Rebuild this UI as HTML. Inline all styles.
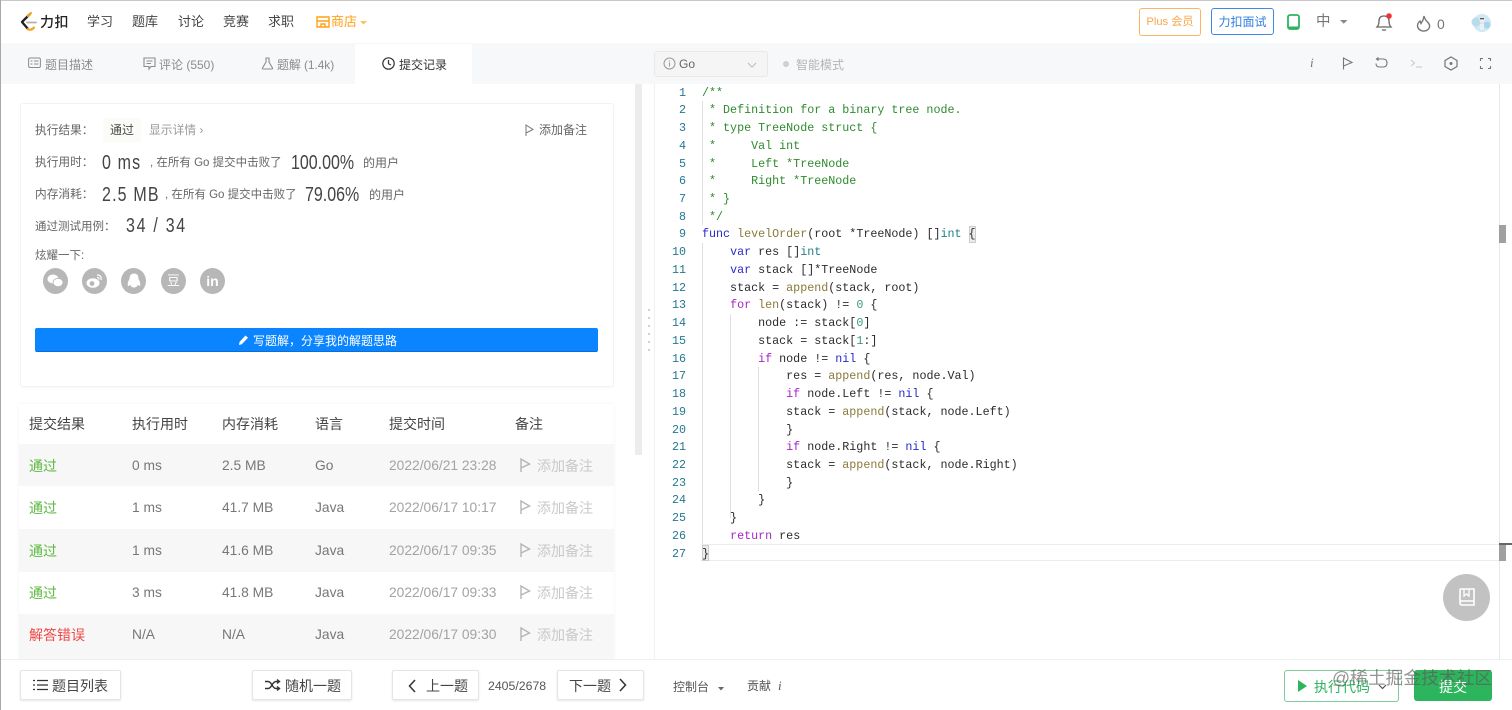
<!DOCTYPE html>
<html lang="zh">
<head>
<meta charset="utf-8">
<title>力扣</title>
<style>
html,body{margin:0;padding:0;background:#fff;}
body{width:1512px;height:710px;overflow:hidden;position:relative;font-family:"Liberation Sans","Noto Sans CJK SC",sans-serif;font-size:12px;color:#5f5f5f;}
.a{position:absolute;white-space:nowrap;}
.t{position:absolute;white-space:nowrap;line-height:20px;height:20px;}
svg{position:absolute;overflow:visible;}
.nav{font-size:13px;color:#444;top:12px;}
.tab{font-size:12px;color:#8c8c8c;top:54px;}
.lbl{font-size:11.7px;color:#666;}
.big{font-size:20.5px;color:#444;transform-origin:0 50%;transform:scaleX(.78);}
.soc{position:absolute;top:268px;width:25px;height:26px;border-radius:50%;background:#b7b7b7;color:#fff;text-align:center;line-height:26px;font-weight:bold;font-size:13px;}
.row{position:absolute;left:19px;width:595px;}
.th{font-size:14px;color:#444;top:414px;}
.c{font-size:13.8px;color:#777;}
.tm{color:#a3a3a3;}
.nt{color:#c9c9c9;font-size:14px;left:537px;}
.g{color:#5cb83f;font-size:14px;left:29px;}
.r{color:#ef4743;font-size:14px;left:29px;}
.btn{position:absolute;top:670px;height:30px;background:#fff;border:1px solid #e5e5e5;border-radius:2px;box-shadow:0 1px 2px rgba(0,0,0,.1);box-sizing:border-box;}
.bt{font-size:14px;color:#444;top:676px;}
#code{position:absolute;left:702px;top:84.6px;font-family:"Liberation Mono",monospace;font-size:11.7px;line-height:17.73px;color:#2b2b2b;white-space:pre;}
#nums{position:absolute;left:656px;width:30px;top:84.6px;text-align:right;font-family:"Liberation Mono",monospace;font-size:11.7px;line-height:17.73px;color:#237893;white-space:pre;}
.cm{color:#2e8b2e;}.kw{color:#2a2acb;}.kp{color:#a626c4;}.fn{color:#8a7a3a;}.ty{color:#23808a;}.nu{color:#3a9a7a;}
.ig{position:absolute;width:1px;background:#e0e0e0;}
</style>
</head>
<body>
<!-- page edges -->
<div class="a" style="left:0;top:0;width:1512px;height:1px;background:#c8c8c8"></div>
<div class="a" style="left:0;top:0;width:1px;height:710px;background:#a8a8a8"></div>

<!-- top nav -->
<svg style="left:19px;top:12px" width="18" height="20" viewBox="0 0 18 20"><path d="M11 2 L3 10 L9 17" fill="none" stroke="#222" stroke-width="2.3" stroke-linecap="round" stroke-linejoin="round"/><path d="M8 10.5H17" stroke="#b3b3b3" stroke-width="1.8" stroke-linecap="round"/><path d="M9 17 Q12 19 15 15.5" fill="none" stroke="#f5a623" stroke-width="2.2" stroke-linecap="round"/><path d="M9 4 L12 1" stroke="#f5a623" stroke-width="2.2" stroke-linecap="round"/></svg>
<div class="t" style="left:40px;top:12px;font-size:14px;font-weight:500;color:#222;letter-spacing:.5px">力扣</div>
<div class="t nav" style="left:87px">学习</div>
<div class="t nav" style="left:132px">题库</div>
<div class="t nav" style="left:178px">讨论</div>
<div class="t nav" style="left:223px">竞赛</div>
<div class="t nav" style="left:268px">求职</div>
<svg style="left:316px;top:16px" width="14" height="12" viewBox="0 0 14 12"><path d="M1 1H13V11H1ZM1 5H13M5 11V8H9V11" fill="none" stroke="#ffa116" stroke-width="1.4"/></svg>
<div class="t nav" style="left:331px;color:#ffa116">商店</div>
<svg style="left:360px;top:21px" width="8" height="5"><path d="M0 0H7L3.500 3.500Z" fill="#ffa116" opacity=".7"/></svg>

<div class="a" style="left:1139px;top:8px;width:62px;height:28px;box-sizing:border-box;border:1px solid #f9b662;border-radius:3px;text-align:center;line-height:27px;font-size:11.2px;color:#f9a64a">Plus 会员</div>
<div class="a" style="left:1211px;top:8px;width:63px;height:27px;box-sizing:border-box;border:1px solid #3d8ae6;border-radius:3px;text-align:center;line-height:26px;font-size:12px;color:#2f80e0">力扣面试</div>
<svg style="left:1287px;top:14px" width="13" height="16" viewBox="0 0 13 16"><rect x="1" y="1" width="11" height="14" rx="2" fill="none" stroke="#2db55d" stroke-width="1.800"/><path d="M1 13.500H12" stroke="#2db55d" stroke-width="2"/></svg>
<div class="t" style="left:1316px;top:12px;font-size:14.500px;color:#777">中</div>
<svg style="left:1340px;top:20px" width="9" height="5"><path d="M0 0H7.500L3.750 3.800Z" fill="#888"/></svg>
<svg style="left:1375px;top:13px" width="18" height="19" viewBox="0 0 18 19"><path d="M2 14 Q4 12 4 8 Q4 3 9 3 Q14 3 14 8 Q14 12 16 14 Z M7 16.500 Q9 18 11 16.500" fill="none" stroke="#666" stroke-width="1.300"/><circle cx="14" cy="3" r="2.800" fill="#ee3333"/></svg>
<svg style="left:1416px;top:15px" width="16" height="17" viewBox="0 0 16 17"><path d="M8 1 Q9 5 12 7.500 Q15 11 12.500 14 Q10 16.500 6.500 16 Q2 15 1.500 11 Q1.500 8 4 6 L5 8.500 Q7.500 5 8 1Z" fill="none" stroke="#777" stroke-width="1.400"/></svg>
<div class="t" style="left:1437px;top:14px;font-size:14px;color:#777">0</div>
<svg style="left:1470px;top:13px" width="22" height="20" viewBox="0 0 22 20"><circle cx="12" cy="10" r="9" fill="#cfe9f5"/><circle cx="6" cy="9" r="4.500" fill="#b9dcea"/><circle cx="17" cy="12" r="3.500" fill="#a9d6ea"/><circle cx="12" cy="7" r="2.600" fill="#f4ece6"/><path d="M10 11H14V17H10Z" fill="#e8f1f5"/><path d="M10 5H14V6.300H10Z" fill="#555"/></svg>

<!-- tab bar -->
<div class="a" style="left:1px;top:43px;width:1511px;height:41px;background:#f7f8f9"></div>
<div class="a" style="left:355px;top:44px;width:117px;height:41px;background:#fff"></div>
<svg style="left:28px;top:57px" width="13" height="12" viewBox="0 0 13 12"><rect x=".6" y="1" width="11.800" height="9.500" rx="1.500" fill="none" stroke="#8c8c8c"/><path d="M2.500 4H4.500M6 4H10.500M2.500 7H4.500M6 7H10.500" stroke="#8c8c8c"/></svg>
<div class="t tab" style="left:45px;top:55px">题目描述</div>
<svg style="left:143px;top:57px" width="13" height="13" viewBox="0 0 13 13"><path d="M1 1H12V9.500H8L6 12V9.500H1Z" fill="none" stroke="#8c8c8c" stroke-width="1.100"/><path d="M3.500 4H9.500M3.500 6.500H8" stroke="#8c8c8c"/></svg>
<div class="t tab" style="left:159px;top:55px">评论 (550)</div>
<svg style="left:261px;top:57px" width="13" height="13" viewBox="0 0 13 13"><path d="M4.500 1H8.500M5 1V5L1.500 11Q1 12 2.500 12H10.500Q12 12 11.500 11L8 5V1" fill="none" stroke="#8c8c8c" stroke-width="1.100"/></svg>
<div class="t tab" style="left:277px;top:55px;letter-spacing:-.1px">题解 (1.4k)</div>
<svg style="left:382px;top:57px" width="13" height="13" viewBox="0 0 13 13"><circle cx="6.500" cy="6.500" r="5.700" fill="none" stroke="#333" stroke-width="1.200"/><path d="M6.500 3V6.800L9 8" fill="none" stroke="#333" stroke-width="1.200"/></svg>
<div class="t tab" style="left:399px;top:55px;color:#333">提交记录</div>

<div class="a" style="left:654px;top:51px;width:114px;height:26px;box-sizing:border-box;background:#f5f5f5;border:1px solid #e8e8e8;border-radius:3px"></div>
<svg style="left:663px;top:57px" width="13" height="13" viewBox="0 0 13 13"><circle cx="6.500" cy="6.500" r="5.500" fill="none" stroke="#999"/><path d="M6.500 5.500V9.500M6.500 3.500V4.500" stroke="#999"/></svg>
<div class="t" style="left:679px;top:54px;font-size:12px;color:#666">Go</div>
<svg style="left:747px;top:62px" width="10" height="6"><path d="M1 1L5 5L9 1" fill="none" stroke="#bbb"/></svg>
<div class="a" style="left:783px;top:61px;width:6px;height:6px;border-radius:50%;background:#cfcfcf"></div>
<div class="t" style="left:796px;top:55px;font-size:12px;color:#b5b5b5">智能模式</div>

<div class="t" style="left:1310px;top:53px;font-size:13px;font-style:italic;font-family:'Liberation Serif',serif;color:#777">i</div>
<svg style="left:1342px;top:57px" width="11" height="13" viewBox="0 0 11 13"><path d="M1.500 12.500V1L10 5.500L1.500 9" fill="none" stroke="#777" stroke-width="1.100"/></svg>
<svg style="left:1375px;top:57px" width="13" height="12" viewBox="0 0 13 12"><path d="M2 2H8.500Q12 2.500 12 6Q12 10 8 10H4.500Q1 10 1 6.500M3.500 .5L1.500 2L3.500 3.500" fill="none" stroke="#777" stroke-width="1.100"/></svg>
<svg style="left:1410px;top:58px" width="13" height="12" viewBox="0 0 13 12"><path d="M1 2L4.500 5L1 8M6 9H12" fill="none" stroke="#c8c8c8" stroke-width="1"/></svg>
<svg style="left:1444px;top:56px" width="14" height="15" viewBox="0 0 14 15"><path d="M7 1L13 4.500V10.500L7 14L1 10.500V4.500Z" fill="none" stroke="#777" stroke-width="1.200"/><circle cx="7" cy="7.500" r="1.500" fill="#777"/></svg>
<svg style="left:1480px;top:58px" width="11" height="11" viewBox="0 0 11 11"><path d="M.5 3V.5H3M8 .5H10.500V3M10.500 8V10.500H8M3 10.500H.5V8" fill="none" stroke="#777" stroke-width="1.100"/></svg>

<!-- result card -->
<div class="a" style="left:20px;top:103px;width:594px;height:284px;box-sizing:border-box;background:#fff;border:1px solid #f3f3f3;border-radius:3px;box-shadow:0 1px 2px rgba(0,0,0,.03)"></div>
<div class="t lbl" style="left:35px;top:121px">执行结果：</div>
<div class="a" style="left:103px;top:118px;width:38px;height:24px;background:#fbfcf8;border-radius:3px"></div>
<div class="t" style="left:110px;top:120px;font-size:12px;color:#4a4a4a">通过</div>
<div class="t" style="left:149px;top:120px;font-size:11.8px;color:#9a9a9a">显示详情 ›</div>
<svg style="left:525px;top:124px" width="9" height="13" viewBox="0 0 9 13"><path d="M1 12V1L8 5.500L1 9" fill="none" stroke="#777" stroke-width="1"/></svg>
<div class="t" style="left:539px;top:120px;font-size:12px;color:#666">添加备注</div>

<div class="t lbl" style="left:35px;top:153px">执行用时：</div>
<div class="t big" style="left:102px;top:153px;letter-spacing:1.500px">0 ms</div>
<div class="t lbl" style="left:150px;top:153px;font-size:11.500px">, 在所有 Go 提交中击败了</div>
<div class="t big" style="left:291px;top:153px">100.00%</div>
<div class="t lbl" style="left:363px;top:153px;font-size:12px">的用户</div>

<div class="t lbl" style="left:35px;top:185px">内存消耗：</div>
<div class="t big" style="left:102px;top:185px;letter-spacing:1.500px">2.5 MB</div>
<div class="t lbl" style="left:165px;top:185px;font-size:11.5px">, 在所有 Go 提交中击败了</div>
<div class="t big" style="left:305px;top:185px">79.06%</div>
<div class="t lbl" style="left:369px;top:185px;font-size:12px">的用户</div>

<div class="t lbl" style="left:35px;top:217px;font-size:11.5px">通过测试用例：</div>
<div class="t big" style="left:126px;top:216px;letter-spacing:2.200px">34 / 34</div>

<div class="t lbl" style="left:35px;top:246px;font-size:11.5px">炫耀一下:</div>
<div class="soc" style="left:43px"></div>
<svg style="left:47px;top:274px" width="17" height="14" viewBox="0 0 17 14"><ellipse cx="6" cy="5" rx="5.500" ry="4.500" fill="#fff"/><ellipse cx="11" cy="8.500" rx="5" ry="4.200" fill="#fff" stroke="#b7b7b7" stroke-width=".8"/></svg>
<div class="soc" style="left:82px"></div>
<svg style="left:85px;top:273px" width="19" height="16" viewBox="0 0 19 16"><ellipse cx="8" cy="10" rx="6.500" ry="4.800" fill="#fff"/><circle cx="7" cy="10.500" r="2.400" fill="#b7b7b7"/><path d="M12 2Q17 2 16 7M12 4.500Q14.500 4.500 14 6.500" fill="none" stroke="#fff" stroke-width="1.200"/></svg>
<div class="soc" style="left:121px"></div>
<svg style="left:127px;top:273px" width="14" height="16" viewBox="0 0 14 16"><path d="M7 .5Q11.500 .5 11.500 6Q14 10 13 13Q11.500 12.500 10.500 12Q10 14.500 7 14.500Q4 14.500 3.500 12Q2.500 12.500 1 13Q0 10 2.500 6Q2.500 .5 7 .5Z" fill="#fff"/></svg>
<div class="soc" style="left:161px;font-size:13px;font-weight:normal">豆</div>
<div class="soc" style="left:200px;font-size:14px;font-family:'Liberation Sans',sans-serif">in</div>

<div class="a" style="left:35px;top:328px;width:563px;height:24px;background:#0a84ff;border-radius:2px;border-bottom:1px solid #0a6fd4;box-sizing:border-box"></div>
<svg style="left:238px;top:334px" width="11" height="12" viewBox="0 0 11 12"><path d="M1 11L1.500 8L7.500 1.500L10 3.800L3.800 10.300Z" fill="#fff"/></svg>
<div class="t" style="left:253px;top:331px;font-size:12px;color:#fff">写题解，分享我的解题思路</div>

<!-- table -->
<div class="a" style="left:19px;top:404px;width:595px;height:255px;background:#fff;box-shadow:0 0 3px rgba(0,0,0,.06)"></div>
<div class="row" style="top:444px;height:42px;background:#f7f7f7"></div>
<div class="row" style="top:529px;height:43px;background:#f7f7f7"></div>
<div class="row" style="top:614px;height:45px;background:#f7f7f7"></div>
<div class="t th" style="left:29px">提交结果</div>
<div class="t th" style="left:132px">执行用时</div>
<div class="t th" style="left:222px">内存消耗</div>
<div class="t th" style="left:315px">语言</div>
<div class="t th" style="left:389px">提交时间</div>
<div class="t th" style="left:515px">备注</div>

<div class="t g" style="top:456px">通过</div><div class="t c" style="left:132px;top:456px">0 ms</div><div class="t c" style="left:222px;top:456px">2.5 MB</div><div class="t c" style="left:315px;top:456px">Go</div><div class="t c tm" style="left:389px;top:456px">2022/06/21 23:28</div><div class="t nt" style="top:456px">添加备注</div>
<div class="t g" style="top:498px">通过</div><div class="t c" style="left:132px;top:498px">1 ms</div><div class="t c" style="left:222px;top:498px">41.7 MB</div><div class="t c" style="left:315px;top:498px">Java</div><div class="t c tm" style="left:389px;top:498px">2022/06/17 10:17</div><div class="t nt" style="top:498px">添加备注</div>
<div class="t g" style="top:541px">通过</div><div class="t c" style="left:132px;top:541px">1 ms</div><div class="t c" style="left:222px;top:541px">41.6 MB</div><div class="t c" style="left:315px;top:541px">Java</div><div class="t c tm" style="left:389px;top:541px">2022/06/17 09:35</div><div class="t nt" style="top:541px">添加备注</div>
<div class="t g" style="top:583px">通过</div><div class="t c" style="left:132px;top:583px">3 ms</div><div class="t c" style="left:222px;top:583px">41.8 MB</div><div class="t c" style="left:315px;top:583px">Java</div><div class="t c tm" style="left:389px;top:583px">2022/06/17 09:33</div><div class="t nt" style="top:583px">添加备注</div>
<div class="t r" style="top:625px">解答错误</div><div class="t c" style="left:132px;top:625px">N/A</div><div class="t c" style="left:222px;top:625px">N/A</div><div class="t c" style="left:315px;top:625px">Java</div><div class="t c tm" style="left:389px;top:625px">2022/06/17 09:30</div><div class="t nt" style="top:625px">添加备注</div>

<svg style="left:520px;top:458px" width="11" height="15" viewBox="0 0 11 15"><path d="M1 14V1L9.500 6L1 10" fill="none" stroke="#b5b5b5" stroke-width="1.400"/></svg>
<svg style="left:520px;top:500px" width="11" height="15" viewBox="0 0 11 15"><path d="M1 14V1L9.500 6L1 10" fill="none" stroke="#b5b5b5" stroke-width="1.400"/></svg>
<svg style="left:520px;top:543px" width="11" height="15" viewBox="0 0 11 15"><path d="M1 14V1L9.500 6L1 10" fill="none" stroke="#b5b5b5" stroke-width="1.400"/></svg>
<svg style="left:520px;top:585px" width="11" height="15" viewBox="0 0 11 15"><path d="M1 14V1L9.500 6L1 10" fill="none" stroke="#b5b5b5" stroke-width="1.400"/></svg>
<svg style="left:520px;top:627px" width="11" height="15" viewBox="0 0 11 15"><path d="M1 14V1L9.500 6L1 10" fill="none" stroke="#b5b5b5" stroke-width="1.400"/></svg>

<!-- left scrollbar + splitter -->
<div class="a" style="left:635px;top:84px;width:7px;height:371px;background:#ececec"></div>
<div class="a" style="left:648px;top:309px;width:2px;height:2px;background:#d0d0d0;box-shadow:0 8px 0 #d0d0d0,0 16px 0 #d0d0d0,0 24px 0 #d0d0d0,0 32px 0 #d0d0d0,0 40px 0 #d0d0d0"></div>

<!-- editor -->
<div class="a" style="left:654px;top:84px;width:1px;height:575px;background:#f0f0f0"></div>
<div class="a" style="left:1499px;top:84px;width:1px;height:575px;background:#e8e8e8"></div>
<div class="a" style="left:701px;top:544px;width:798px;height:17px;box-sizing:border-box;border-top:1px solid #ececec;border-bottom:1px solid #ececec"></div>
<div class="a" style="left:1499px;top:225px;width:7px;height:18px;background:#a0a0a0"></div>
<div class="a" style="left:1499px;top:543px;width:13px;height:2px;background:#666"></div>
<div class="a" style="left:1499px;top:545px;width:7px;height:16px;background:#a0a0a0"></div>

<div class="ig" style="left:702px;top:101px;height:124px"></div>
<div class="ig" style="left:702px;top:243px;height:301px"></div>
<div class="ig" style="left:730px;top:314px;height:204px"></div>
<div class="ig" style="left:758px;top:367px;height:124px"></div>
<div class="a" style="left:969px;top:226px;width:7px;height:17px;background:#ececec;border:1px solid #ccc;box-sizing:border-box"></div>
<div class="a" style="left:702px;top:545px;width:7px;height:16px;background:#ececec;border:1px solid #ccc;box-sizing:border-box"></div>

<div id="nums">1
2
3
4
5
6
7
8
9
10
11
12
13
14
15
16
17
18
19
20
21
22
23
24
25
26
27</div>
<div id="code"><span class="cm">/**
 * Definition for a binary tree node.
 * type TreeNode struct {
 *     Val int
 *     Left *TreeNode
 *     Right *TreeNode
 * }
 */</span>
<span class="kw">func</span> <span class="fn">levelOrder</span>(root *TreeNode) []<span class="ty">int</span> {
    <span class="kw">var</span> res []<span class="ty">int</span>
    <span class="kw">var</span> stack []*TreeNode
    stack = <span class="fn">append</span>(stack, root)
    <span class="kp">for</span> <span class="fn">len</span>(stack) != <span class="nu">0</span> {
        node := stack[<span class="nu">0</span>]
        stack = stack[<span class="nu">1</span>:]
        <span class="kp">if</span> node != <span class="kw">nil</span> {
            res = <span class="fn">append</span>(res, node.Val)
            <span class="kp">if</span> node.Left != <span class="kw">nil</span> {
            stack = <span class="fn">append</span>(stack, node.Left)
            }
            <span class="kp">if</span> node.Right != <span class="kw">nil</span> {
            stack = <span class="fn">append</span>(stack, node.Right)
            }
        }
    }
    <span class="kp">return</span> res
}</div>

<!-- round book button -->
<div class="a" style="left:1443px;top:574px;width:47px;height:47px;border-radius:50%;background:#c2c2c2"></div>
<svg style="left:1459px;top:588px" width="16" height="19" viewBox="0 0 16 19"><path d="M1 2Q1 1 2 1H15V17H3Q1 17 1 15ZM1 14.500Q1 13 3 13H15" fill="none" stroke="#fff" stroke-width="1.600"/><path d="M5 1V8L7.500 6L10 8V1" fill="none" stroke="#fff" stroke-width="1.300"/></svg>

<!-- bottom bar -->
<div class="a" style="left:1px;top:659px;width:1511px;height:51px;background:#fff;border-top:1px solid #f0f0f0;box-sizing:border-box"></div>
<div class="btn" style="left:20px;width:101px"></div>
<svg style="left:33px;top:679px" width="15" height="12" viewBox="0 0 15 12"><path d="M4 1.500H15M4 6H15M4 10.500H15M0 1.500H2M0 6H2M0 10.500H2" stroke="#333" stroke-width="1.300"/></svg>
<div class="t bt" style="left:52px">题目列表</div>
<div class="btn" style="left:252px;width:100px"></div>
<svg style="left:265px;top:679px" width="15" height="12" viewBox="0 0 15 12"><path d="M0 2.500H3Q5 2.500 7 6Q9 9.500 11 9.500H14M0 9.500H3Q5 9.500 7 6Q9 2.500 11 2.500H14M12 .5L14.500 2.500L12 4.500M12 7.500L14.500 9.500L12 11.500" fill="none" stroke="#333" stroke-width="1.400"/></svg>
<div class="t bt" style="left:285px">随机一题</div>
<div class="btn" style="left:392px;width:87px"></div>
<svg style="left:408px;top:679px" width="8" height="14" viewBox="0 0 8 14"><path d="M7 1L1.500 7L7 13" fill="none" stroke="#333" stroke-width="1.500"/></svg>
<div class="t bt" style="left:426px">上一题</div>
<div class="t" style="left:488px;top:676px;font-size:12.300px;color:#555">2405/2678</div>
<div class="btn" style="left:557px;width:87px"></div>
<div class="t bt" style="left:569px">下一题</div>
<svg style="left:619px;top:678px" width="8" height="14" viewBox="0 0 8 14"><path d="M1 1L6.500 7L1 13" fill="none" stroke="#333" stroke-width="1.500"/></svg>
<div class="t" style="left:673px;top:677px;font-size:12px;color:#555">控制台</div>
<svg style="left:718px;top:687px" width="6" height="4"><path d="M0 0H6L3 3.500Z" fill="#666"/></svg>
<div class="t" style="left:747px;top:676px;font-size:12px;color:#555">贡献</div>
<div class="t" style="left:778px;top:676px;font-size:13px;font-style:italic;font-family:'Liberation Serif',serif;color:#555">i</div>

<div class="a" style="left:1284px;top:670px;width:115px;height:32px;box-sizing:border-box;border:1px solid #7fcb9b;border-radius:3px;background:#fff"></div>
<svg style="left:1298px;top:680px" width="10" height="12"><path d="M0 0L9 6L0 12Z" fill="#2db55d"/></svg>
<div class="t" style="left:1314px;top:677px;font-size:14px;color:#2db55d">执行代码</div>
<svg style="left:1378px;top:684px" width="9" height="6"><path d="M1 1L4.500 4.500L8 1" fill="none" stroke="#555" stroke-width="1.200"/></svg>
<div class="a" style="left:1414px;top:670px;width:78px;height:31px;background:#2db55d;border-radius:3px"></div>
<div class="t" style="left:1439px;top:677px;font-size:14px;color:#fff">提交</div>

<!-- watermark -->
<div class="t" style="left:1332px;top:668px;font-size:17.800px;color:rgba(90,90,90,.65)">@稀土掘金技术社区</div>
</body>
</html>
